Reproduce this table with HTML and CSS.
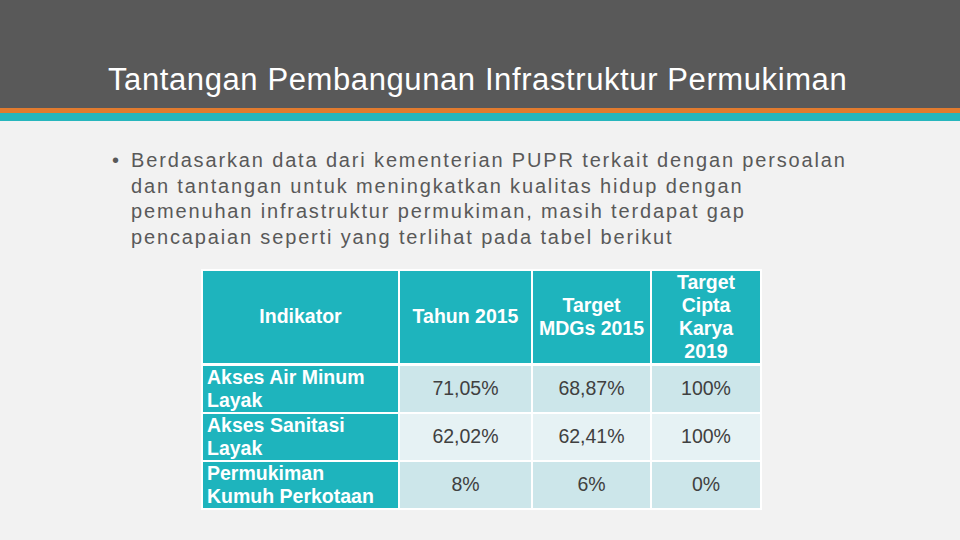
FILE: index.html
```html
<!DOCTYPE html>
<html>
<head>
<meta charset="utf-8">
<link rel="stylesheet" href="styles.css">
</head>
<body>
<header class="topbar">
  <h1 class="title">Tantangan Pembangunan Infrastruktur Permukiman</h1>
</header>
<div class="stripe-orange"></div>
<div class="stripe-teal"></div>
<main class="content">
  <ul class="bullets">
    <li>Berdasarkan data dari kementerian PUPR terkait dengan persoalan dan tantangan untuk meningkatkan kualitas hidup dengan pemenuhan infrastruktur permukiman, masih terdapat gap pencapaian seperti yang terlihat pada tabel berikut</li>
  </ul>
  <table class="data">
    <thead>
      <tr>
        <th class="c1">Indikator</th>
        <th class="c2">Tahun 2015</th>
        <th class="c3">Target MDGs 2015</th>
        <th class="c4">Target Cipta Karya 2019</th>
      </tr>
    </thead>
    <tbody>
      <tr class="odd">
        <td class="label">Akses Air Minum Layak</td>
        <td>71,05%</td>
        <td>68,87%</td>
        <td>100%</td>
      </tr>
      <tr class="even">
        <td class="label">Akses Sanitasi Layak</td>
        <td>62,02%</td>
        <td>62,41%</td>
        <td>100%</td>
      </tr>
      <tr class="odd">
        <td class="label">Permukiman Kumuh Perkotaan</td>
        <td>8%</td>
        <td>6%</td>
        <td>0%</td>
      </tr>
    </tbody>
  </table>
</main>
</body>
</html>
```

FILE: styles.css
```css
html, body {
  margin: 0;
  padding: 0;
}
body {
  width: 960px;
  height: 540px;
  overflow: hidden;
  background: #f2f2f2;
  font-family: "Liberation Sans", Arial, sans-serif;
}
.topbar {
  height: 108px;
  background: #595959;
  box-sizing: border-box;
  padding: 62px 0 0 108px;
}
.title {
  margin: 0;
  font-weight: normal;
  font-size: 31px;
  line-height: 36px;
  color: #ffffff;
  letter-spacing: 0.6px;
  white-space: nowrap;
}
.stripe-orange {
  height: 5px;
  background: #e27b2f;
}
.stripe-teal {
  height: 8px;
  background: #27b6bd;
}
.content {
  padding: 27px 0 0 0;
}
.bullets {
  margin: 0;
  padding: 0 0 0 131px;
  width: 740px;
  list-style: none;
}
.bullets li {
  position: relative;
  font-size: 20px;
  line-height: 25.7px;
  color: #595959;
  letter-spacing: 1.85px;
}
.bullets li::before {
  content: "\2022";
  position: absolute;
  left: -19px;
  top: 0;
  color: #595959;
  letter-spacing: 0;
}
.data {
  margin: 18px 0 0 201px;
  border-collapse: collapse;
  font-size: 19.5px;
}
.data th, .data td {
  border: 2px solid #ffffff;
  padding: 0;
  text-align: center;
  vertical-align: middle;
}
.data th {
  background: #1eb4bd;
  color: #ffffff;
  font-weight: bold;
  line-height: 23px;
  height: 92px;
}
.data thead th {
  border-bottom-width: 3px;
}
th.c1 { width: 195px; }
th.c2 { width: 131px; }
th.c3 { width: 111px; padding: 0 3px; }
th.c4 { width: 84px; padding: 0 12px; }
.data td {
  height: 46px;
  color: #404040;
  line-height: 23px;
}
.data td.label {
  background: #1eb4bd;
  color: #ffffff;
  font-weight: bold;
  text-align: left;
  padding: 0 6px 0 4px;
}
.odd td { background: #cce6ea; }
.even td { background: #e6f2f4; }
```
